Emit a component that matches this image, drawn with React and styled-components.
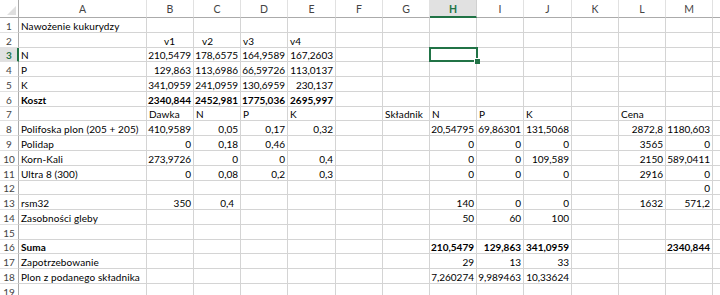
import React from "react";
import styled, { createGlobalStyle, css } from "styled-components";

const GREEN = "#217346";
const GRID = "#d4d4d4";
const HEAD_LINE = "#ababab";

const COLS = ["A", "B", "C", "D", "E", "F", "G", "H", "I", "J", "K", "L", "M", "N"];
const COL_W = [128, 47, 47, 47, 48, 47, 47, 47, 47, 48, 47, 47, 47, 47];
const ROW_H = [15, 15, 14, 15, 15, 15, 14, 15, 15, 15, 15, 14, 15, 15, 15, 14, 15, 15, 15];

const SEL_COL = "H";
const SEL_ROW = 3;

// one entry per row, cells A..M; objects for bold / indent
const DATA = [
  ["Nawożenie kukurydzy"],
  ["", { v: "v1", indent: 17 }, { v: "v2", indent: 8 }, "v3", "v4"],
  ["N", "210,5479", "178,6575", "164,9589", "167,2603"],
  ["P", "129,863", "113,6986", "66,59726", "113,0137"],
  ["K", "341,0959", "241,0959", "130,6959", "230,137"],
  [{ v: "Koszt", b: true }, { v: "2340,844", b: true }, { v: "2452,981", b: true }, { v: "1775,036", b: true }, { v: "2695,997", b: true }],
  ["", "Dawka", "N", "P", "K", "", "Składnik", "N", "P", "K", "", "Cena"],
  ["Polifoska plon (205 + 205)", "410,9589", "0,05", "0,17", "0,32", "", "", "20,54795", "69,86301", "131,5068", "", "2872,8", "1180,603"],
  ["Polidap", "0", "0,18", "0,46", "", "", "", "0", "0", "0", "", "3565", "0"],
  ["Korn-Kali", "273,9726", "0", "0", "0,4", "", "", "0", "0", "109,589", "", "2150", "589,0411"],
  ["Ultra 8 (300)", "0", "0,08", "0,2", "0,3", "", "", "0", "0", "0", "", "2916", "0"],
  ["", "", "", "", "", "", "", "", "", "", "", "", "0"],
  ["rsm32", "350", { v: "0,4", pr: 6 }, "", "", "", "", "140", "0", "0", "", "1632", "571,2"],
  ["Zasobności gleby", "", "", "", "", "", "", "50", "60", "100"],
  [],
  [{ v: "Suma", b: true }, "", "", "", "", "", "", { v: "210,5479", b: true }, { v: "129,863", b: true }, { v: "341,0959", b: true }, "", "", { v: "2340,844", b: true }],
  ["Zapotrzebowanie", "", "", "", "", "", "", "29", "13", "33"],
  ["Plon z podanego składnika", "", "", "", "", "", "", "7,260274", "9,989463", "10,33624"],
  [],
];

const GlobalStyle = createGlobalStyle`
  html, body {
    margin: 0;
    padding: 0;
    background: #fff;
    overflow: hidden;
  }
  body {
    font-family: Lato, "Liberation Sans", sans-serif;
  }
`;

const Sheet = styled.div`
  display: grid;
  grid-template-columns: 19px ${COL_W.map((w) => `${w}px`).join(" ")};
  grid-template-rows: 18px ${ROW_H.map((h) => `${h}px`).join(" ")};
  width: 720px;
  height: 295px;
  overflow: hidden;
  font-size: 10px;
  color: #000;
`;

const Corner = styled.div`
  position: relative;
  border-right: 1px solid ${HEAD_LINE};
  border-bottom: 1px solid ${HEAD_LINE};
  box-sizing: border-box;
  &::after {
    content: "";
    position: absolute;
    right: 2px;
    bottom: 2px;
    border-style: solid;
    border-width: 0 0 9px 9px;
    border-color: transparent transparent #dfdfdf transparent;
  }
`;

const ColHead = styled.div`
  box-sizing: border-box;
  display: flex;
  align-items: center;
  justify-content: center;
  border-right: 1px solid #e1e1e1;
  border-bottom: 1px solid ${HEAD_LINE};
  color: #444;
  font-size: 10.5px;
  padding-top: 1px;
  ${({ $active }) =>
    $active &&
    css`
      background: #e1e1e1;
      color: ${GREEN};
      font-weight: 700;
      border-right-color: #d0d0d0;
      border-bottom: 2px solid ${GREEN};
      padding-top: 2px;
    `}
`;

const RowHead = styled.div`
  box-sizing: border-box;
  display: flex;
  align-items: flex-end;
  justify-content: center;
  border-right: 1px solid ${HEAD_LINE};
  border-bottom: 1px solid #e1e1e1;
  color: #444;
  font-size: 10px;
  line-height: 12px;
  ${({ $active }) =>
    $active &&
    css`
      background: #e1e1e1;
      color: ${GREEN};
      font-weight: 700;
      border-right: 2px solid ${GREEN};
      padding-left: 1px;
    `}
`;

const Cell = styled.div`
  position: relative;
  box-sizing: border-box;
  display: flex;
  align-items: flex-end;
  justify-content: ${({ $right }) => ($right ? "flex-end" : "flex-start")};
  border-right: 1px solid ${GRID};
  border-bottom: 1px solid ${GRID};
  padding: 0 ${({ $pr }) => $pr ?? 2}px 0 ${({ $indent }) => $indent ?? 2}px;
  line-height: 12px;
  white-space: nowrap;
  letter-spacing: ${({ $right }) => ($right ? 0 : 0.1)}px;
  font-weight: ${({ $bold }) => ($bold ? 700 : 400)};
  ${({ $selected }) =>
    $selected &&
    css`
      &::after {
        content: "";
        position: absolute;
        left: -1px;
        top: -1px;
        right: -2px;
        bottom: -1px;
        border: 2px solid ${GREEN};
        z-index: 2;
      }
      &::before {
        content: "";
        position: absolute;
        right: -4px;
        bottom: -3px;
        width: 5px;
        height: 5px;
        background: ${GREEN};
        border-left: 1px solid #fff;
        border-top: 1px solid #fff;
        z-index: 3;
      }
    `}
`;

const isNumber = (s) => /^-?[\d,]+$/.test(s);

const SheetCell = ({ value, selected }) => {
  const c = typeof value === "object" && value !== null ? value : { v: value ?? "" };
  return (
    <Cell
      $right={isNumber(c.v)}
      $bold={c.b}
      $indent={c.indent}
      $pr={c.pr}
      $selected={selected}
    >
      {c.v}
    </Cell>
  );
};

export default function App() {
  return (
    <>
      <GlobalStyle />
      <Sheet>
        <Corner />
        {COLS.map((c) => (
          <ColHead key={c} $active={c === SEL_COL}>
            {c}
          </ColHead>
        ))}
        {ROW_H.map((_, r) => {
          const row = DATA[r] || [];
          return (
            <React.Fragment key={r}>
              <RowHead $active={r + 1 === SEL_ROW}>{r + 1}</RowHead>
              {COLS.map((c, ci) => (
                <SheetCell
                  key={c}
                  value={row[ci]}
                  selected={c === SEL_COL && r + 1 === SEL_ROW}
                />
              ))}
            </React.Fragment>
          );
        })}
      </Sheet>
    </>
  );
}
